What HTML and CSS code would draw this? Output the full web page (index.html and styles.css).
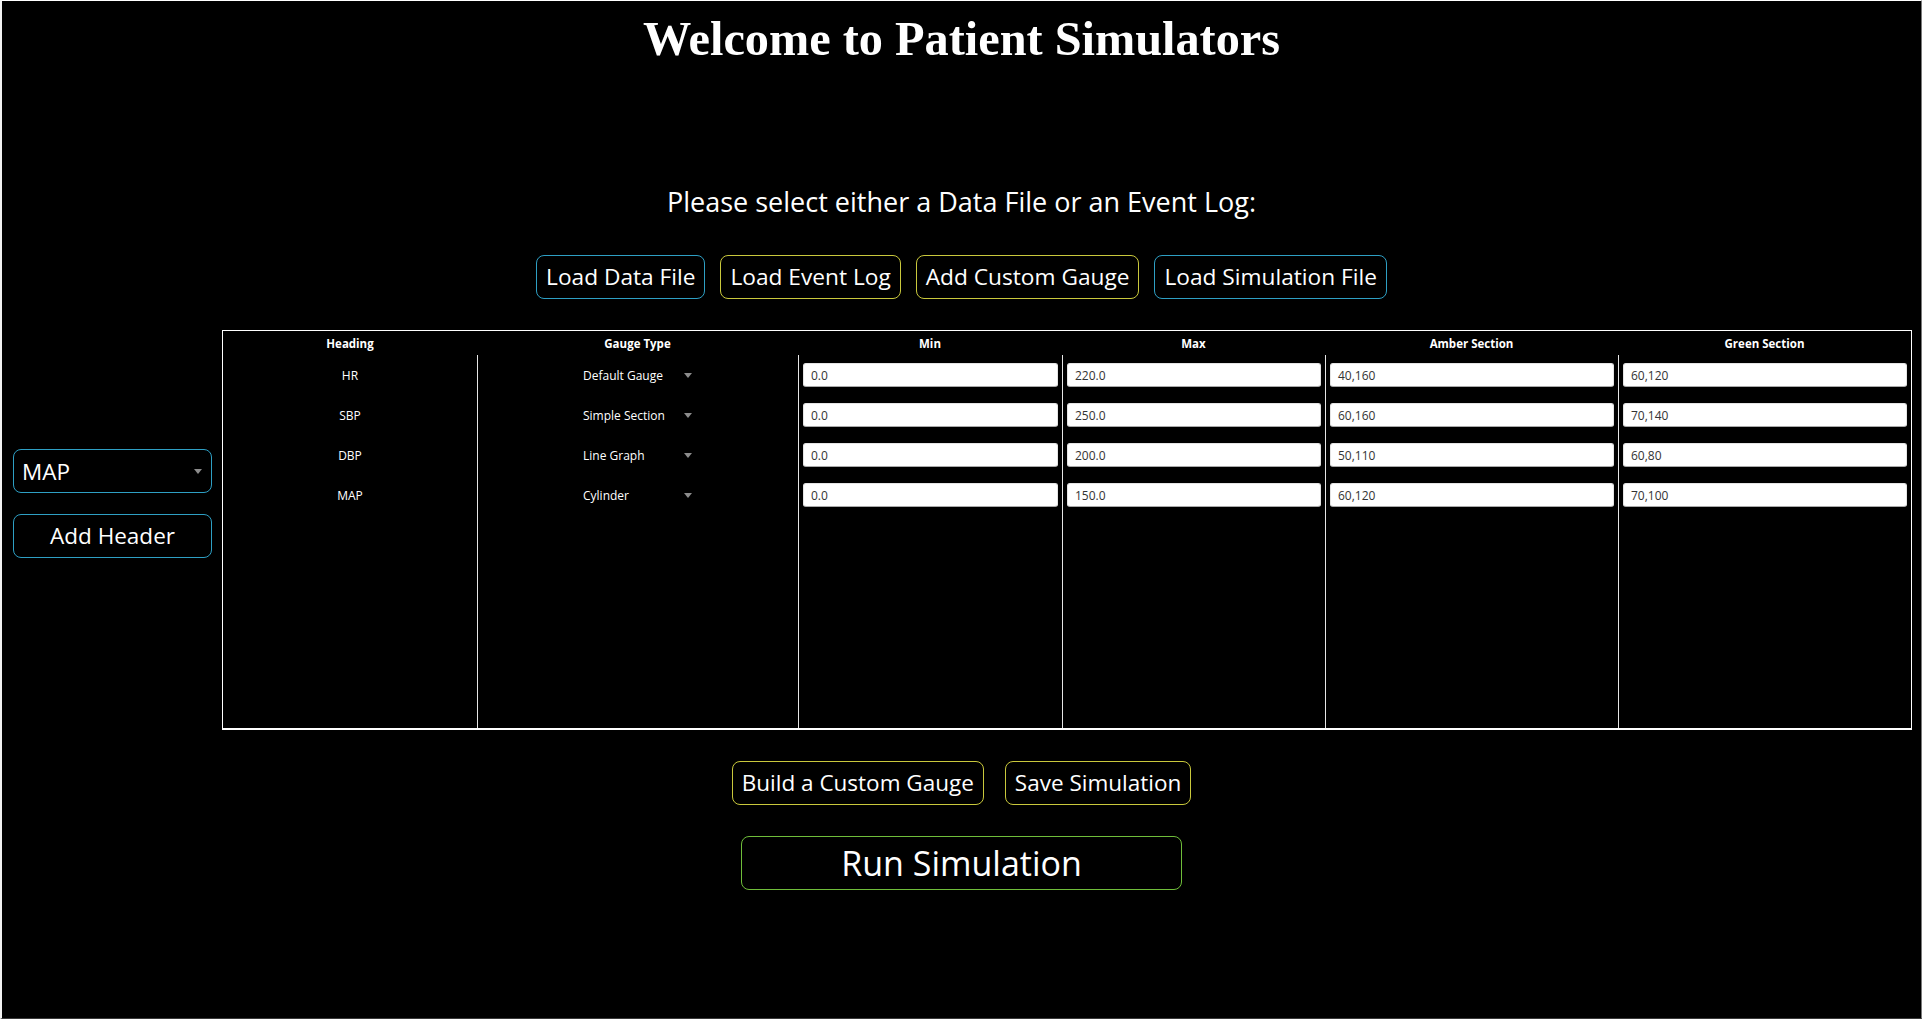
FILE: index.html
```html
<!DOCTYPE html>
<html lang="en">
<head>
<meta charset="utf-8">
<title>Patient Simulators</title>
<link rel="stylesheet" href="styles.css">
</head>
<body>
<div class="window">
  <span class="corner-mark"></span>
  <h1 class="title">Welcome to Patient Simulators</h1>
  <p class="prompt">Please select either a Data File or an Event Log:</p>
  <div class="btn-row top-actions">
    <button class="btn btn-blue">Load Data File</button>
    <button class="btn btn-yellow">Load Event Log</button>
    <button class="btn btn-yellow">Add Custom Gauge</button>
    <button class="btn btn-blue">Load Simulation File</button>
  </div>
  <div class="main">
    <aside class="side">
      <div class="combo combo-large"><span>MAP</span><span class="arrow"></span></div>
      <button class="btn btn-blue btn-side">Add Header</button>
    </aside>
    <div class="table">
      <div class="col">
        <div class="th">Heading</div>
        <div class="col-body first">
          <div class="cell">HR</div>
          <div class="cell">SBP</div>
          <div class="cell">DBP</div>
          <div class="cell">MAP</div>
        </div>
      </div>
      <div class="col">
        <div class="th">Gauge Type</div>
        <div class="col-body">
          <div class="cell"><div class="combo combo-small"><span>Default Gauge</span><span class="arrow"></span></div></div>
          <div class="cell"><div class="combo combo-small"><span>Simple Section</span><span class="arrow"></span></div></div>
          <div class="cell"><div class="combo combo-small"><span>Line Graph</span><span class="arrow"></span></div></div>
          <div class="cell"><div class="combo combo-small"><span>Cylinder</span><span class="arrow"></span></div></div>
        </div>
      </div>
      <div class="col">
        <div class="th">Min</div>
        <div class="col-body">
          <div class="cell field-cell"><div class="field">0.0</div></div>
          <div class="cell field-cell"><div class="field">0.0</div></div>
          <div class="cell field-cell"><div class="field">0.0</div></div>
          <div class="cell field-cell"><div class="field">0.0</div></div>
        </div>
      </div>
      <div class="col">
        <div class="th">Max</div>
        <div class="col-body">
          <div class="cell field-cell"><div class="field">220.0</div></div>
          <div class="cell field-cell"><div class="field">250.0</div></div>
          <div class="cell field-cell"><div class="field">200.0</div></div>
          <div class="cell field-cell"><div class="field">150.0</div></div>
        </div>
      </div>
      <div class="col">
        <div class="th">Amber Section</div>
        <div class="col-body">
          <div class="cell field-cell"><div class="field">40,160</div></div>
          <div class="cell field-cell"><div class="field">60,160</div></div>
          <div class="cell field-cell"><div class="field">50,110</div></div>
          <div class="cell field-cell"><div class="field">60,120</div></div>
        </div>
      </div>
      <div class="col">
        <div class="th">Green Section</div>
        <div class="col-body">
          <div class="cell field-cell"><div class="field">60,120</div></div>
          <div class="cell field-cell"><div class="field">70,140</div></div>
          <div class="cell field-cell"><div class="field">60,80</div></div>
          <div class="cell field-cell"><div class="field">70,100</div></div>
        </div>
      </div>
    </div>
  </div>
  <div class="btn-row bottom-actions">
    <button class="btn btn-yellow">Build a Custom Gauge</button>
    <button class="btn btn-yellow">Save Simulation</button>
  </div>
  <div class="btn-row run-row">
    <button class="btn btn-green btn-run">Run Simulation</button>
  </div>
</div>
</body>
</html>
```

FILE: styles.css
```css
html, body {
  margin: 0;
  padding: 0;
  background: #000;
}

.window {
  position: relative;
  box-sizing: border-box;
  width: 1922px;
  height: 1019px;
  overflow: hidden;
  background: #000;
  color: #fff;
  border-top: 1px solid #fff;
  border-left: 2px solid #f2f2f2;
  border-right: 1px solid #7a7a7a;
  border-bottom: 1px solid #3a3a3a;
  font-family: "Open Sans", "Noto Sans", sans-serif;
}

.corner-mark {
  position: absolute;
  left: -2px;
  top: 0;
  width: 2px;
  height: 20px;
  background: #e0102a;
}

.title {
  margin: 10px 0 0;
  text-align: center;
  font-family: "Liberation Serif", "Times New Roman", serif;
  font-weight: bold;
  font-size: 48.3px;
  line-height: 55px;
  color: #fff;
}

.prompt {
  margin: 120px 0 0;
  text-align: center;
  font-size: 27px;
  line-height: 32px;
}

.btn-row {
  display: flex;
  justify-content: center;
}

.top-actions {
  margin-top: 37px;
  gap: 15px;
}

.btn {
  box-sizing: border-box;
  height: 44px;
  padding: 0 9px;
  background: #000;
  color: #fff;
  font-family: "Open Sans", "Noto Sans", sans-serif;
  font-size: 22.5px;
  line-height: 1;
  border: 1px solid #fff;
  border-radius: 8px;
  cursor: pointer;
}

.top-actions .btn {
  font-size: 22.7px;
}

.btn-blue { border-color: #2e9fc4; }
.btn-yellow { border-color: #c9c83c; }
.btn-green { border-color: #6fbd3a; }

.main {
  display: flex;
  margin-top: 31px;
}

.side {
  box-sizing: border-box;
  width: 220px;
  padding: 119px 10px 0 11px;
  display: flex;
  flex-direction: column;
  gap: 21px;
}

.btn-side {
  width: 100%;
}

.combo {
  box-sizing: border-box;
  display: flex;
  align-items: center;
  justify-content: space-between;
}

.combo-large {
  height: 44px;
  padding: 0 9px 0 8px;
  border: 1px solid #2e9fc4;
  border-radius: 8px;
  font-size: 22.5px;
}

.arrow {
  width: 0;
  height: 0;
  border-left: 4px solid transparent;
  border-right: 4px solid transparent;
  border-top: 5px solid #8c8c8c;
}

.table {
  box-sizing: border-box;
  width: 1690px;
  height: 400px;
  border: 1px solid #fff;
  border-bottom-width: 2px;
  display: grid;
  grid-template-columns: 254px 321px 264px 263px 293px 293px;
}

.col {
  display: flex;
  flex-direction: column;
}

.th {
  height: 25px;
  display: flex;
  align-items: center;
  justify-content: center;
  font-size: 11.5px;
  font-weight: bold;
}

.col-body {
  flex: 1;
  border-left: 1px solid #e6e6e6;
  margin-top: -1px;
}

.col-body.first {
  border-left: none;
}

.cell {
  height: 40px;
  display: flex;
  align-items: center;
  justify-content: center;
  font-size: 12px;
}

.combo-small {
  width: 126px;
  padding: 0 9px 0 8px;
  font-size: 12px;
}

.field-cell {
  padding: 0 4px 0 4px;
}

.field {
  box-sizing: border-box;
  flex: 1;
  height: 24px;
  display: flex;
  align-items: center;
  padding-left: 7px;
  background: #fff;
  color: #333;
  font-size: 12px;
  border-radius: 3px;
  border: 1px solid #e4e4e4;
  border-bottom-color: #a9a9a9;
}

.bottom-actions {
  margin-top: 31px;
  gap: 21px;
}

.run-row {
  margin-top: 31px;
}

.btn-run {
  width: 441px;
  height: 54px;
  font-size: 34px;
}
```
